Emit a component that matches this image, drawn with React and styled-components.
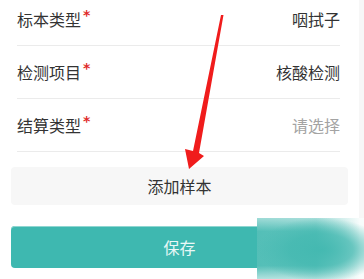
import styled, { createGlobalStyle } from 'styled-components'

const GlobalStyle = createGlobalStyle`
  html, body {
    margin: 0;
    padding: 0;
    background: #f7f7f7;
    font-family: "Noto Sans CJK SC", "Noto Sans", sans-serif;
  }
`

const Page = styled.div`
  position: relative;
  display: flex;
  width: 364px;
  height: 279px;
  overflow: hidden;
`

const Main = styled.div`
  width: 359px;
  background: #fff;
  display: flex;
  flex-direction: column;
`

const Side = styled.div`
  flex: 1;
  background: #f7f7f7;
`

const FormList = styled.div`
  margin-top: -7px;
  padding: 0 19px 0 17px;
`

const Row = styled.div`
  display: flex;
  align-items: center;
  justify-content: space-between;
  height: 52px;
  border-bottom: 1px solid #ebebeb;
  font-size: 16px;
  color: #333;
`

const Label = styled.span`
  display: flex;
  align-items: flex-start;
`

const Star = styled.span`
  color: #e02a2a;
  font-family: "DejaVu Sans", sans-serif;
  font-weight: bold;
  font-size: 14px;
  line-height: 1;
  margin-left: 2px;
  margin-top: 1px;
`

const Value = styled.span`
  color: ${(p) => (p.$placeholder ? '#a3a3a3' : '#333')};
`

const Actions = styled.div`
  display: flex;
  flex-direction: column;
  padding: 15px 11px 0;
`

const AddButton = styled.button`
  height: 38px;
  border: none;
  border-radius: 4px;
  background: #f7f7f7;
  color: #333;
  font-family: inherit;
  font-size: 16px;
`

const SaveButton = styled.button`
  margin-top: 21px;
  height: 42px;
  border: none;
  border-radius: 4px;
  background: #3eb8b0;
  box-shadow: inset 0 1px 0 #8fd6d1;
  color: #e9f8f7;
  font-family: inherit;
  font-size: 16px;
`

// blurred watermark over the corner of the save button
const Watermark = styled.div`
  position: absolute;
  left: 257px;
  top: 218px;
  width: 107px;
  height: 61px;
  background:
    radial-gradient(ellipse 64px 32px at 60% 52%, rgba(66, 184, 176, 0.95) 0%, rgba(66, 184, 176, 0.75) 50%, rgba(66, 184, 176, 0) 100%),
    linear-gradient(180deg, rgba(255, 255, 255, 0.45) 0%, rgba(255, 255, 255, 0) 22%, rgba(255, 255, 255, 0) 78%, rgba(255, 255, 255, 0.55) 100%),
    linear-gradient(90deg, rgba(66, 184, 176, 0.9) 0%, rgba(66, 184, 176, 0.82) 55%, rgba(66, 184, 176, 0.35) 80%, rgba(255, 255, 255, 0) 96%),
    #f4fbfa;
`

const ArrowOverlay = styled.svg`
  position: absolute;
  left: 0;
  top: 0;
  pointer-events: none;
`

const rows = [
  { label: '标本类型', value: '咽拭子' },
  { label: '检测项目', value: '核酸检测' },
  { label: '结算类型', value: '请选择', placeholder: true },
]

export default function App() {
  return (
    <>
      <GlobalStyle />
      <Page>
        <Main>
          <FormList>
            {rows.map((r) => (
              <Row key={r.label}>
                <Label>
                  {r.label}
                  <Star>*</Star>
                </Label>
                <Value $placeholder={r.placeholder}>{r.value}</Value>
              </Row>
            ))}
          </FormList>
          <Actions>
            <AddButton>添加样本</AddButton>
            <SaveButton>保存</SaveButton>
          </Actions>
        </Main>
        <Side />
        <Watermark />
        <ArrowOverlay width="364" height="279">
          <polygon
            points="221,15 223.5,15 199,153 204,156 189,169 185,149 193,151"
            fill="#f01c1c"
          />
        </ArrowOverlay>
      </Page>
    </>
  )
}
